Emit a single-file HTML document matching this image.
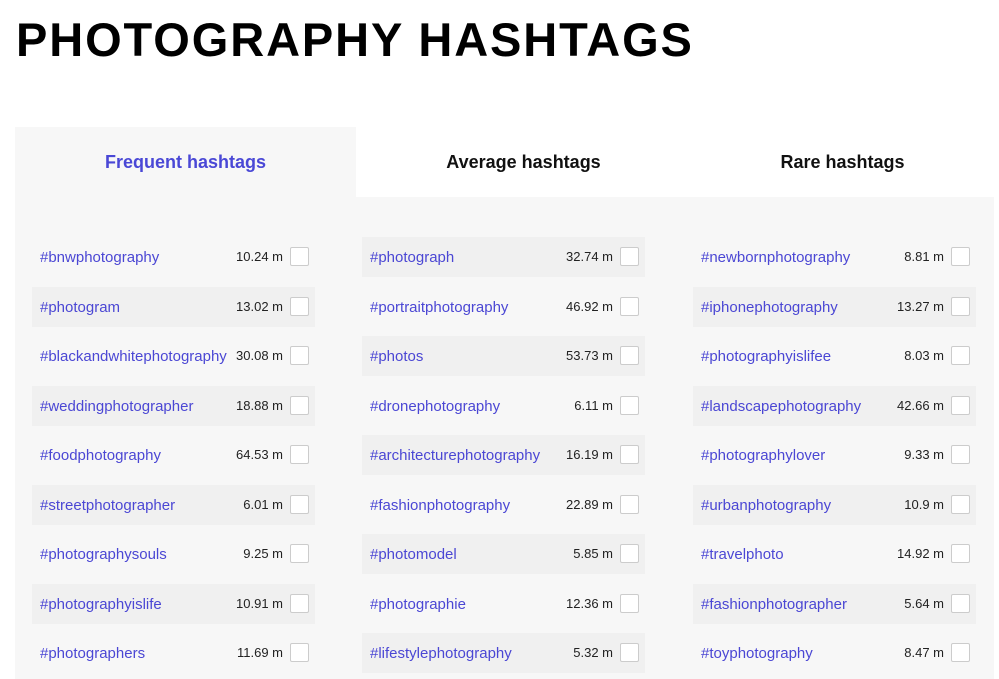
<!DOCTYPE html>
<html><head><meta charset="utf-8"><style>
*{margin:0;padding:0;box-sizing:border-box}
body{width:999px;height:679px;background:#fff;font-family:"Liberation Sans",Arial,sans-serif;position:relative;overflow:hidden}
h1{position:absolute;left:16px;top:10px;font-size:47px;font-weight:bold;color:#000;letter-spacing:1.9px;white-space:nowrap;line-height:60px}
.tab{position:absolute;top:127px;height:70px;line-height:70px;text-align:center;font-size:18px;font-weight:bold;color:#111}
.panel{position:absolute;left:15px;top:197px;width:979px;height:482px;background:#f7f7f7}
.row{position:absolute;width:283px;height:40px;font-size:15px}
.row.s{background:#f0f0f0}
.row .t{position:absolute;left:8px;top:12px;color:#4b47d4;white-space:nowrap;overflow:hidden;width:196px}
.row .n{position:absolute;right:32px;top:12px;font-size:13px;color:#222;background:inherit}
.row .c{position:absolute;right:6px;top:10px;width:19px;height:19px;border:1px solid #ccc;border-radius:2px;background:#fff}
</style></head><body>
<h1>PHOTOGRAPHY HASHTAGS</h1>
<div class="panel"></div>
<div class="tab" style="left:15px;width:341px;background:#f7f7f7;color:#4a48d6">Frequent hashtags</div>
<div class="tab" style="left:356px;width:335px">Average hashtags</div>
<div class="tab" style="left:691px;width:303px">Rare hashtags</div>
<div id="r"></div>
<script>
var cols=[[32,0,[["#bnwphotography","10.24 m"],["#photogram","13.02 m"],["#blackandwhitephotography","30.08 m"],["#weddingphotographer","18.88 m"],["#foodphotography","64.53 m"],["#streetphotographer","6.01 m"],["#photographysouls","9.25 m"],["#photographyislife","10.91 m"],["#photographers","11.69 m"]]],
[362,1,[["#photograph","32.74 m"],["#portraitphotography","46.92 m"],["#photos","53.73 m"],["#dronephotography","6.11 m"],["#architecturephotography","16.19 m"],["#fashionphotography","22.89 m"],["#photomodel","5.85 m"],["#photographie","12.36 m"],["#lifestylephotography","5.32 m"]]],
[693,0,[["#newbornphotography","8.81 m"],["#iphonephotography","13.27 m"],["#photographyislifee","8.03 m"],["#landscapephotography","42.66 m"],["#photographylover","9.33 m"],["#urbanphotography","10.9 m"],["#travelphoto","14.92 m"],["#fashionphotographer","5.64 m"],["#toyphotography","8.47 m"]]]];
var h="";
cols.forEach(function(c){c[2].forEach(function(r,i){
var s=((i%2==0)==(c[1]==1))?" s":"";
h+='<div class="row'+s+'" style="left:'+c[0]+'px;top:'+(237+i*49.5)+'px"><span class="t">'+r[0]+'</span><span class="n">'+r[1]+'</span><span class="c"></span></div>';});});
document.getElementById("r").innerHTML=h;
</script>
</body></html>
